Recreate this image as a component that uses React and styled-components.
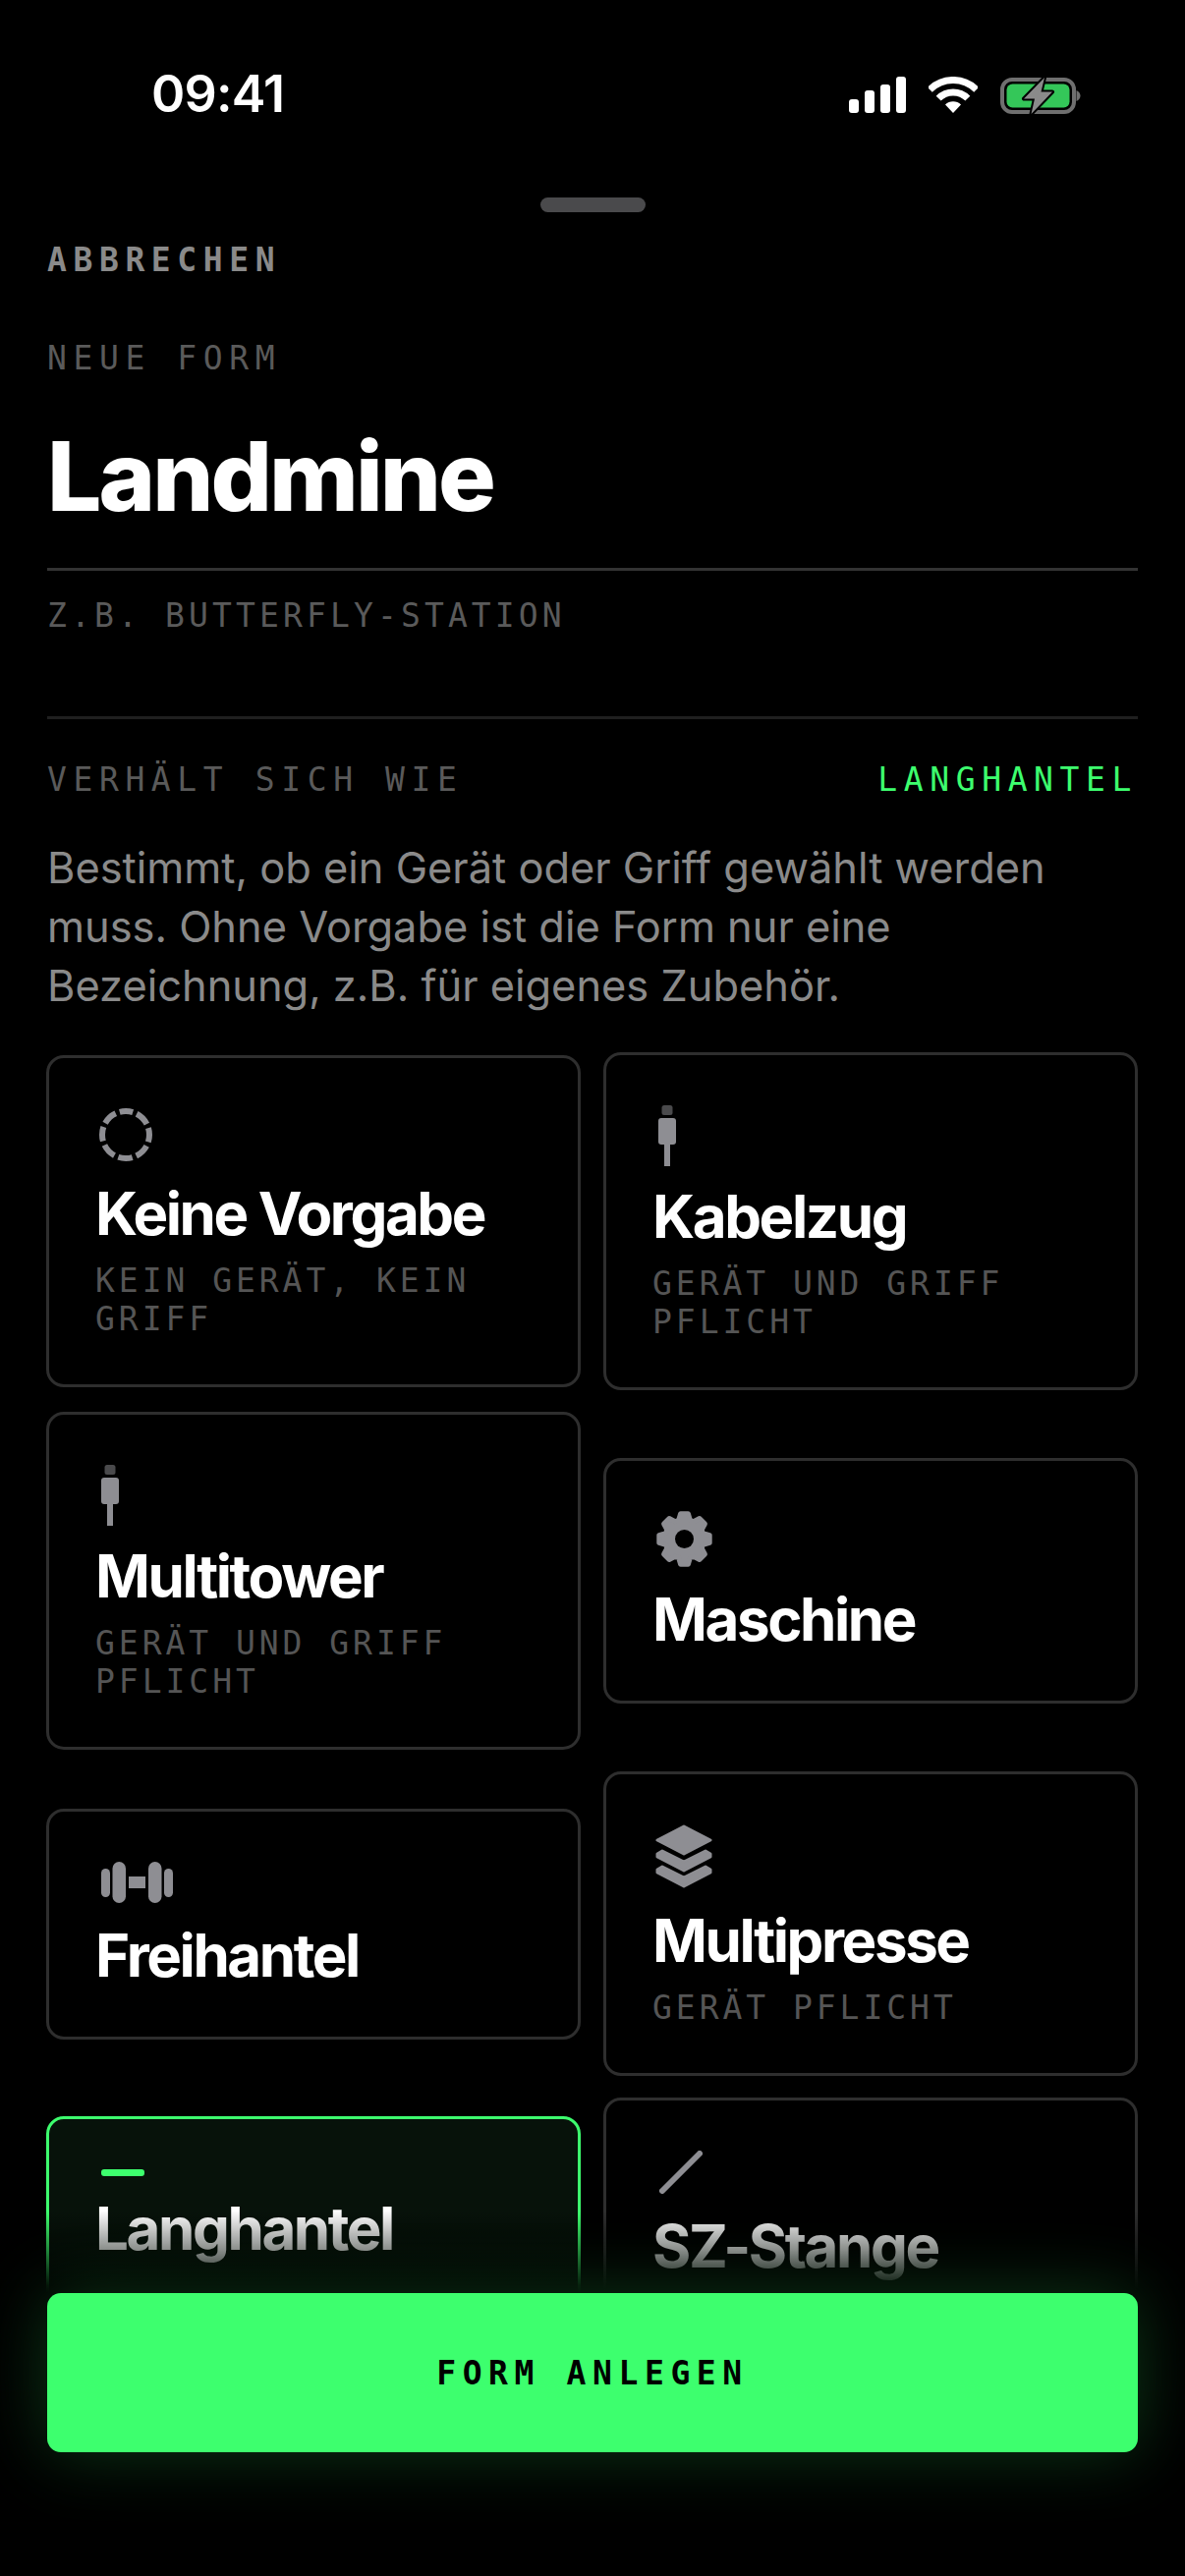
import React from "react";
import styled, { createGlobalStyle } from "styled-components";

const GREEN = "#3dff6e";
const ICON = "#8e8e93";
const MONO = `"DejaVu Sans Mono", "Liberation Mono", monospace`;
const SANS = `Inter, "Noto Sans", sans-serif`;

const GlobalStyle = createGlobalStyle`
	html, body {
		margin: 0;
		height: 2622px;
		background: #000;
		overflow: hidden;
	}
	* {
		box-sizing: border-box;
	}
`;

const Screen = styled.div`
	position: relative;
	width: 1206px;
	height: 2622px;
	overflow: hidden;
	background: #000;
`;

const StatusBar = styled.div`
	display: flex;
	justify-content: space-between;
	align-items: flex-start;
	height: 201px;
	padding: 66px 106px 0 154px;
`;

const Clock = styled.div`
	font-family: ${SANS};
	font-size: 52px;
	font-weight: 600;
	line-height: 60px;
	letter-spacing: -0.015em;
	color: #fff;
`;

const StatusIcons = styled.div`
	display: flex;
	align-items: flex-start;
	gap: 23px;
	margin-top: 12px;
	svg {
		display: block;
	}
`;

const Handle = styled.div`
	width: 107px;
	height: 15px;
	margin: 0 auto;
	border-radius: 8px;
	background: #4a4a4c;
`;

const Head = styled.div`
	padding: 29px 48px 0;
`;

const Label = styled.div`
	font-family: ${MONO};
	font-size: 33px;
	line-height: 40px;
	letter-spacing: ${(p) => p.$spacing || "0.2em"};
	font-weight: ${(p) => (p.$bold ? 700 : 400)};
	color: ${(p) => p.$color || "#5a5a5a"};
	white-space: nowrap;
`;

const NewForm = styled(Label)`
	margin-top: 60px;
`;

const NameField = styled.h1`
	margin: 45px 0 0;
	padding-bottom: 38px;
	border-bottom: 3px solid #333;
	font-family: ${SANS};
	font-size: 98px;
	font-weight: 800;
	line-height: 110px;
	letter-spacing: -0.03em;
	color: #fff;
`;

const Placeholder = styled(Label)`
	margin-top: 26px;
`;

const Divider = styled.div`
	height: 3px;
	margin-top: 82px;
	background: #1f1f1f;
`;

const BehaviourRow = styled.div`
	display: flex;
	justify-content: space-between;
	margin-top: 42px;
`;

const Description = styled.p`
	margin: 39px 0 0;
	font-family: ${SANS};
	font-size: 43.4px;
	line-height: 60px;
	color: #8a8a8a;
`;

const CardGrid = styled.div`
	display: grid;
	grid-template-columns: 1fr 1fr;
	gap: 22px 23px;
	align-items: center;
	margin-top: 38px;
	padding: 0 48px 0 47px;
`;

const Card = styled.div`
	padding: 51px 47px 47px;
	border: 3px solid ${(p) => (p.$active ? GREEN : "#2e2e2e")};
	border-radius: 18px;
	background: ${(p) => (p.$active ? "#07120a" : "#000")};
`;

const IconSlot = styled.div`
	display: flex;
	height: ${(p) => p.$height}px;
	margin-left: ${(p) => p.$inset}px;
	svg {
		display: block;
		flex: none;
	}
`;

const CardTitle = styled.div`
	margin-top: 17px;
	font-family: ${SANS};
	font-size: 60px;
	font-weight: 700;
	line-height: 72px;
	letter-spacing: -0.04em;
	color: #fff;
`;

const CardHint = styled.div`
	margin-top: 13px;
	font-family: ${MONO};
	font-size: 33px;
	line-height: 39px;
	letter-spacing: 0.12em;
	color: #555;
`;

const Footer = styled.div`
	position: absolute;
	left: 0;
	right: 0;
	bottom: 0;
	padding: 84px 48px 126px;
	background: linear-gradient(to bottom, rgba(0, 0, 0, 0) 0, rgba(0, 0, 0, 0.45) 40px, rgba(0, 0, 0, 0.95) 76px, #000 84px);
`;

const SubmitButton = styled.button`
	display: block;
	width: 100%;
	height: 162px;
	padding: 0;
	border: 0;
	border-radius: 14px;
	background: ${GREEN};
	box-shadow: 0 0 70px rgba(61, 255, 110, 0.22);
	font-family: ${MONO};
	font-size: 33px;
	font-weight: 700;
	letter-spacing: 0.2em;
	color: #000;
`;

function SignalIcon() {
	return (
		<svg width="58" height="37" viewBox="0 0 58 37" fill="#fff">
			<rect x="0" y="23" width="10" height="14" rx="3" />
			<rect x="16" y="14" width="10" height="23" rx="3" />
			<rect x="32" y="8" width="10" height="29" rx="3" />
			<rect x="48" y="0" width="10" height="37" rx="3" />
		</svg>
	);
}

function WifiIcon() {
	return (
		<svg width="50" height="37" viewBox="0 0 50 37" fill="none" stroke="#fff" strokeWidth="7">
			<path d="M1.3 13.3A33.5 33.5 0 0 1 48.7 13.3" />
			<path d="M10.15 22.15A21 21 0 0 1 39.85 22.15" />
			<path d="M25 37L17 28.5A11.5 11.5 0 0 1 33 28.5Z" fill="#fff" stroke="none" />
		</svg>
	);
}

function BatteryIcon() {
	return (
		<svg width="82" height="39" viewBox="0 0 82 39">
			<rect x="2" y="3" width="73" height="33" rx="10" fill="none" stroke="#6f6f6f" strokeWidth="4" />
			<rect x="6.5" y="7.5" width="64" height="24" rx="6" fill="#34c759" />
			<path d="M77.5 14c2.5 1 4 3 4 5.500s-1.500 4.500-4 5.500z" fill="#6f6f6f" />
			<path
				d="M45 1L24 22.500H35L31.500 38L53 15.500H41.500Z"
				fill="#8a8a8a"
				stroke="#000"
				strokeWidth="4"
				strokeLinejoin="round"
				paintOrder="stroke"
			/>
		</svg>
	);
}

function DashedCircleIcon() {
	return (
		<svg width="54" height="54" viewBox="0 0 54 54" fill="none">
			<circle cx="27" cy="27" r="24" stroke={ICON} strokeWidth="6" strokeDasharray="14.650 4.200" strokeDashoffset="7.325" transform="rotate(-90 27 27)" />
		</svg>
	);
}

function CableIcon() {
	return (
		<svg width="18" height="62" viewBox="0 0 18 62">
			<rect x="3.500" y="0" width="11" height="10" rx="2.500" fill="#4a4a4c" />
			<rect x="0" y="13" width="18" height="27" rx="3" fill={ICON} />
			<rect x="6" y="40" width="6" height="22" fill={ICON} />
		</svg>
	);
}

// eight teeth, the round stroke takes care of the soft corners
const gearPoints = Array.from({ length: 8 }, (_, i) => {
	const a = (i * Math.PI) / 4 - Math.PI / 2;
	const at = (r, d) => `${(28.5 + r * Math.cos(a + d)).toFixed(2)},${(28.5 + r * Math.sin(a + d)).toFixed(2)}`;
	return [at(20, -0.3), at(26, -0.15), at(26, 0.15), at(20, 0.3)].join(" ");
}).join(" ");

function GearIcon() {
	return (
		<svg width="57" height="57" viewBox="0 0 57 57">
			<polygon points={gearPoints} fill={ICON} stroke={ICON} strokeWidth="5" strokeLinejoin="round" />
			<circle cx="28.500" cy="28.500" r="9.500" fill="#000" />
		</svg>
	);
}

function DumbbellIcon() {
	return (
		<svg width="73" height="42" viewBox="0 0 73 42" fill={ICON}>
			<rect x="0" y="7" width="9" height="29" rx="4.500" />
			<rect x="11.500" y="0" width="13.500" height="42" rx="6.750" />
			<rect x="28" y="15" width="17" height="12" />
			<rect x="48" y="0" width="13.500" height="42" rx="6.750" />
			<rect x="64" y="7" width="9" height="29" rx="4.500" />
		</svg>
	);
}

function LayersIcon() {
	return (
		<svg width="58" height="65" viewBox="0 0 58 65" fill={ICON} stroke={ICON} strokeWidth="3" strokeLinejoin="round">
			<path d="M29 2L56 16L29 30L2 16Z" />
			<path d="M7 27L29 38L51 27L56 30V33L29 47L2 33V30Z" />
			<path d="M7 43L29 54L51 43L56 46V49L29 63L2 49V46Z" />
		</svg>
	);
}

function BarIcon() {
	return (
		<svg width="44" height="7" viewBox="0 0 44 7">
			<rect width="44" height="7" rx="3" fill={GREEN} />
		</svg>
	);
}

function CurlBarIcon() {
	return (
		<svg width="44" height="44" viewBox="0 0 44 44">
			<path d="M3 41L41 3" stroke={ICON} strokeWidth="6" strokeLinecap="round" />
		</svg>
	);
}

const cards = [
	{ title: "Keine Vorgabe", hint: "KEIN GERÄT, KEIN GRIFF", icon: <DashedCircleIcon />, height: 54, inset: 4 },
	{ title: "Kabelzug", hint: "GERÄT UND GRIFF PFLICHT", icon: <CableIcon />, height: 60, inset: 6 },
	{ title: "Multitower", hint: "GERÄT UND GRIFF PFLICHT", icon: <CableIcon />, height: 60, inset: 6 },
	{ title: "Maschine", icon: <GearIcon />, height: 57, inset: 4 },
	{ title: "Freihantel", icon: <DumbbellIcon />, height: 42, inset: 6 },
	{ title: "Multipresse", hint: "GERÄT PFLICHT", icon: <LayersIcon />, height: 65, inset: 3 },
	{ title: "Langhantel", icon: <BarIcon />, height: 7, inset: 6, active: true },
	{ title: "SZ-Stange", icon: <CurlBarIcon />, height: 44, inset: 7 },
];

export default function App() {
	return (
		<Screen>
			<GlobalStyle />
			<StatusBar>
				<Clock>09:41</Clock>
				<StatusIcons>
					<SignalIcon />
					<WifiIcon />
					<BatteryIcon />
				</StatusIcons>
			</StatusBar>
			<Handle />
			<Head>
				<Label $bold $color="#8a8a8a">ABBRECHEN</Label>
				<NewForm>NEUE FORM</NewForm>
				<NameField>Landmine</NameField>
				<Placeholder $spacing="0.125em">Z.B. BUTTERFLY-STATION</Placeholder>
				<Divider />
				<BehaviourRow>
					<Label>VERHÄLT SICH WIE</Label>
					<Label $color={GREEN}>LANGHANTEL</Label>
				</BehaviourRow>
				<Description>
					Bestimmt, ob ein Gerät oder Griff gewählt werden muss. Ohne Vorgabe ist die Form nur eine Bezeichnung, z.B. für eigenes Zubehör.
				</Description>
			</Head>
			<CardGrid>
				{cards.map((card) => (
					<Card key={card.title} $active={card.active}>
						<IconSlot $height={card.height} $inset={card.inset}>{card.icon}</IconSlot>
						<CardTitle>{card.title}</CardTitle>
						{card.hint && <CardHint>{card.hint}</CardHint>}
					</Card>
				))}
			</CardGrid>
			<Footer>
				<SubmitButton>FORM ANLEGEN</SubmitButton>
			</Footer>
		</Screen>
	);
}
